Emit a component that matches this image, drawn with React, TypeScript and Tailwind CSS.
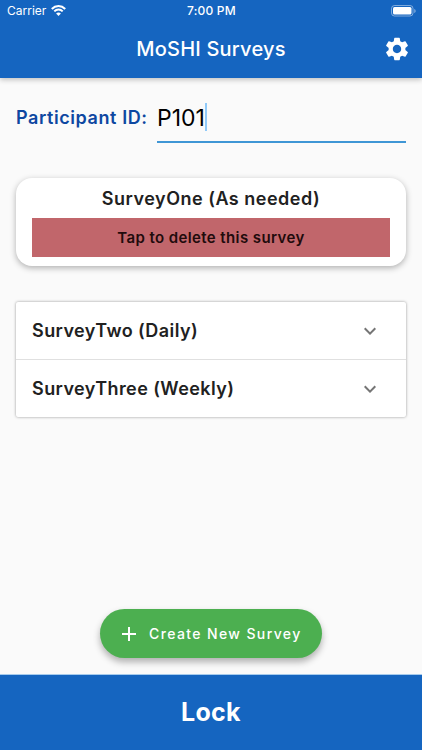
import { FC } from "react";
import { MdAdd, MdExpandMore, MdSettings } from "react-icons/md";

interface SurveyRowProps {
  title: string;
}

const StatusBar: FC = () => {
  return (
    <div className="flex h-[22px] items-center justify-between pl-[7px] pr-[6px] text-white">
      <div className="flex w-[120px] items-center gap-[5px]">
        <span className="text-[12px] leading-[22px]">Carrier</span>
        <svg className="-mt-px h-[11px] w-[15px]" viewBox="0 0 15 11" fill="none" stroke="currentColor">
          <path d="M0.8 3.9C4.6 0.1 10.4 0.1 14.2 3.9" strokeWidth="2.1" />
          <path d="M3.3 6.4C5.7 4 9.3 4 11.7 6.4" strokeWidth="2" />
          <path d="M7.5 10.9L5.1 8.5C6.5 7.2 8.5 7.2 9.9 8.5Z" fill="currentColor" stroke="none" />
        </svg>
      </div>
      <span className="text-[12px] font-medium leading-[22px] tracking-[0.2px]">7:00 PM</span>
      <div className="flex w-[120px] justify-end">
        <svg className="-mt-px h-[12px] w-[25px]" viewBox="0 0 25 12" fill="none">
          <rect x="0.5" y="0.5" width="21.5" height="10.5" rx="3" stroke="white" strokeOpacity="0.45" />
          <rect x="2" y="2" width="18.5" height="7.5" rx="1.5" fill="white" />
          <path d="M23.3 4v4c0.8-0.4 1.3-1.1 1.3-2s-0.5-1.6-1.3-2z" fill="white" fillOpacity="0.5" />
        </svg>
      </div>
    </div>
  );
};

const Header: FC = () => {
  return (
    <header className="h-[78px] bg-[#1565c0] shadow-[0_2px_5px_rgba(0,0,0,0.22)]">
      <StatusBar />
      <div className="grid h-[54px] grid-cols-[50px_1fr_50px] items-center text-white">
        <h1 className="col-start-2 text-center text-[20px] font-medium leading-[28px] tracking-[0.2px]">
          MoSHI Surveys
        </h1>
        <button className="flex justify-center" aria-label="Settings">
          <MdSettings className="size-[28px]" />
        </button>
      </div>
    </header>
  );
};

const SurveyRow: FC<SurveyRowProps> = ({ title }) => {
  return (
    <div className="flex h-[57px] items-center justify-between pl-4 pr-[24px]">
      <span className="text-[18px] font-semibold tracking-[0.42px] text-[#212121]">{title}</span>
      <MdExpandMore className="size-[24px] text-[#757575]" />
    </div>
  );
};

const App: FC = () => {
  return (
    <div className="flex h-[750px] w-[422px] flex-col bg-[#fafafa] font-['Inter',sans-serif]">
      <Header />

      <main className="flex flex-1 flex-col px-4">
        <div className="mt-[23px] flex h-[42px] items-start">
          <label className="w-[141px] whitespace-nowrap pt-[3px] text-[18px] font-semibold leading-[28px] tracking-[0.58px] text-[#0d47a1]">
            Participant ID:
          </label>
          <div className="flex h-[42px] flex-1 items-start border-b-2 border-[#3f96d5]">
            <span className="pt-[3px] text-[23px] leading-[28px] text-black">P101</span>
            <span className="mt-[2px] h-[28px] w-[2px] bg-[#90caf9]" />
          </div>
        </div>

        <section className="mt-[35px] flex h-[88px] flex-col rounded-[16px] bg-white px-4 pt-[8px] shadow-[0_2px_6px_rgba(0,0,0,0.3)]">
          <h2 className="text-center text-[18px] font-semibold leading-[26px] tracking-[0.5px] text-[#212121]">
            SurveyOne (As needed)
          </h2>
          <button className="mt-[6px] h-[39px] bg-[#c1666b] pt-px text-[15px] font-semibold tracking-[0.4px] text-[#210b0c]">
            Tap to delete this survey
          </button>
        </section>

        <section className="mt-[36px] rounded-[2px] bg-white shadow-[0_0_3px_rgba(0,0,0,0.4)]">
          <SurveyRow title="SurveyTwo (Daily)" />
          <div className="h-px bg-[#e0e0e0]" />
          <SurveyRow title="SurveyThree (Weekly)" />
        </section>

        <button className="mb-[16px] mt-auto flex h-[49px] w-[222px] items-center self-center rounded-full bg-[#4caf50] pl-[17px] text-white shadow-[0_4px_7px_rgba(0,0,0,0.3)]">
          <MdAdd className="size-[24px]" />
          <span className="ml-[8px] text-[14px] font-medium tracking-[1.38px]">Create New Survey</span>
        </button>
      </main>

      <button className="h-[76px] border-t border-[#a6cbed] bg-[#1565c0] pt-px text-[25px] font-bold tracking-[0.3px] text-white">
        Lock
      </button>
    </div>
  );
};

export default App;
